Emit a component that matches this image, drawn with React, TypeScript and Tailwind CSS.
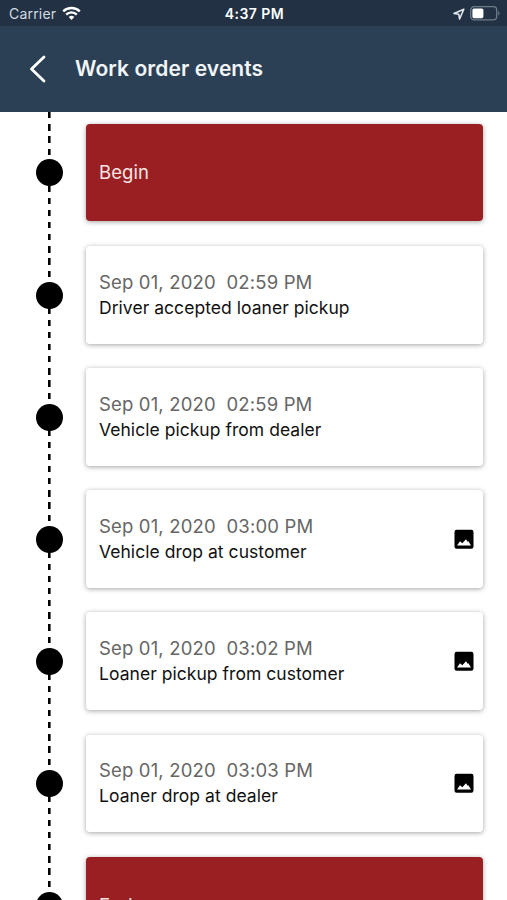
type WorkEvent = {
  title: string;
  date?: string;
  time?: string;
  hasImage?: boolean;
};

const events: WorkEvent[] = [
  { title: "Begin" },
  { date: "Sep 01, 2020", time: "02:59 PM", title: "Driver accepted loaner pickup" },
  { date: "Sep 01, 2020", time: "02:59 PM", title: "Vehicle pickup from dealer" },
  { date: "Sep 01, 2020", time: "03:00 PM", title: "Vehicle drop at customer", hasImage: true },
  { date: "Sep 01, 2020", time: "03:02 PM", title: "Loaner pickup from customer", hasImage: true },
  { date: "Sep 01, 2020", time: "03:03 PM", title: "Loaner drop at dealer", hasImage: true },
  { title: "End" },
];

function StatusBar() {
  return (
    <div className="grid h-[25.5px] grid-cols-3 items-center bg-[#223244] pt-[2px] pr-[7px] pl-[9px] text-white">
      <div className="flex items-center gap-[6px]">
        <span className="text-[14px] leading-none tracking-[0.2px] text-[#d3dae1]">Carrier</span>
        <svg width="19" height="15" viewBox="0 0 19 15" fill="none" stroke="#fff" strokeWidth="2.4">
          <path d="M1.2 5.4a11.8 11.8 0 0 1 16.6 0" />
          <path d="M4.2 8.6a7.5 7.5 0 0 1 10.6 0" />
          <path d="M9.5 14 6.7 11.1a4 4 0 0 1 5.6 0Z" fill="#fff" stroke="none" />
        </svg>
      </div>
      <span className="text-center text-[14px] leading-none font-semibold tracking-[0.45px] whitespace-nowrap">4:37 PM</span>
      <div className="flex items-center justify-end gap-[5px]">
        <svg width="12" height="12" viewBox="0 0 12 12" fill="none" stroke="#dfe6ec" strokeWidth="1.6" strokeLinejoin="round">
          <path d="M10.8 1.2 1 5.4l4.8.8.8 4.8Z" />
        </svg>
        <svg width="30" height="15" viewBox="0 0 30 15">
          <rect x="0.7" y="0.7" width="26" height="13.2" rx="3.4" fill="none" stroke="#6e7b89" strokeWidth="1.3" />
          <rect x="2.4" y="2.4" width="11" height="9.8" rx="1.6" fill="#fff" />
          <path d="M28.2 5v4.6c1.8-.8 1.8-3.8 0-4.6Z" fill="#6e7b89" />
        </svg>
      </div>
    </div>
  );
}

function ImageIcon() {
  return (
    <svg width="20" height="20" viewBox="0 0 20 20">
      <rect x="0.5" y="0.8" width="19" height="19" rx="2.2" fill="#000" />
      <path d="M3 16.4 6 12.2 8.3 14.3 12 10.2 13.6 12.8 14.4 12.3 17 16.4Z" fill="#fff" />
    </svg>
  );
}

function EventRow({ event }: { event: WorkEvent }) {
  const marker = !event.date;
  return (
    <div className="flex h-[122.17px] shrink-0 items-center">
      {/* Timeline: dashed line with the dot in the middle */}
      <div className="flex h-full w-[86px] items-center bg-[repeating-linear-gradient(to_bottom,#000_0px,#000_6.3px,transparent_6.3px,transparent_12.217px)] bg-[length:2.6px_100%] bg-[position:48.4px_0px] bg-no-repeat pt-[0.6px] pl-[36.3px]">
        <div className="size-[27px] rounded-full bg-black" />
      </div>
      <div
        className={`flex h-[97.6px] w-[396.5px] items-center rounded-[4px] pr-[9px] pl-[13px] shadow-[0_1px_5px_rgba(0,0,0,0.36)] ${
          marker ? "bg-[#9a1f22]" : "bg-white"
        }`}
      >
        {marker ? (
          <p className="pt-px text-[18.5px] tracking-[0.1px] text-[#f7e6e6]">{event.title}</p>
        ) : (
          <div className="flex-1">
            <p className="text-[18.5px] leading-[25px] tracking-[0.16px] whitespace-pre text-[#666]">
              {event.date}  {event.time}
            </p>
            <p className="text-[17.5px] leading-[25px] tracking-[0.04px] text-[#111]">{event.title}</p>
          </div>
        )}
        {event.hasImage && <ImageIcon />}
      </div>
    </div>
  );
}

export default function App() {
  return (
    <div className="flex h-[900px] w-[507px] flex-col overflow-hidden bg-white font-['Inter','Liberation_Sans',sans-serif]">
      <StatusBar />
      <header className="flex h-[86px] shrink-0 items-center gap-[28px] bg-[#2b4054] pl-[29px]">
        <svg width="18" height="28" viewBox="0 0 18 28" fill="none" stroke="#fff" strokeWidth="2.8" strokeLinecap="round" strokeLinejoin="round">
          <path d="M15 2 2.5 14 15 26" />
        </svg>
        <h1 className="text-[21px] font-semibold tracking-[0.08px] text-[#f1f5f8]">Work order events</h1>
      </header>
      <main className="flex min-h-0 flex-1 flex-col overflow-hidden">
        {events.map((event, i) => (
          <EventRow key={i} event={event} />
        ))}
      </main>
    </div>
  );
}
